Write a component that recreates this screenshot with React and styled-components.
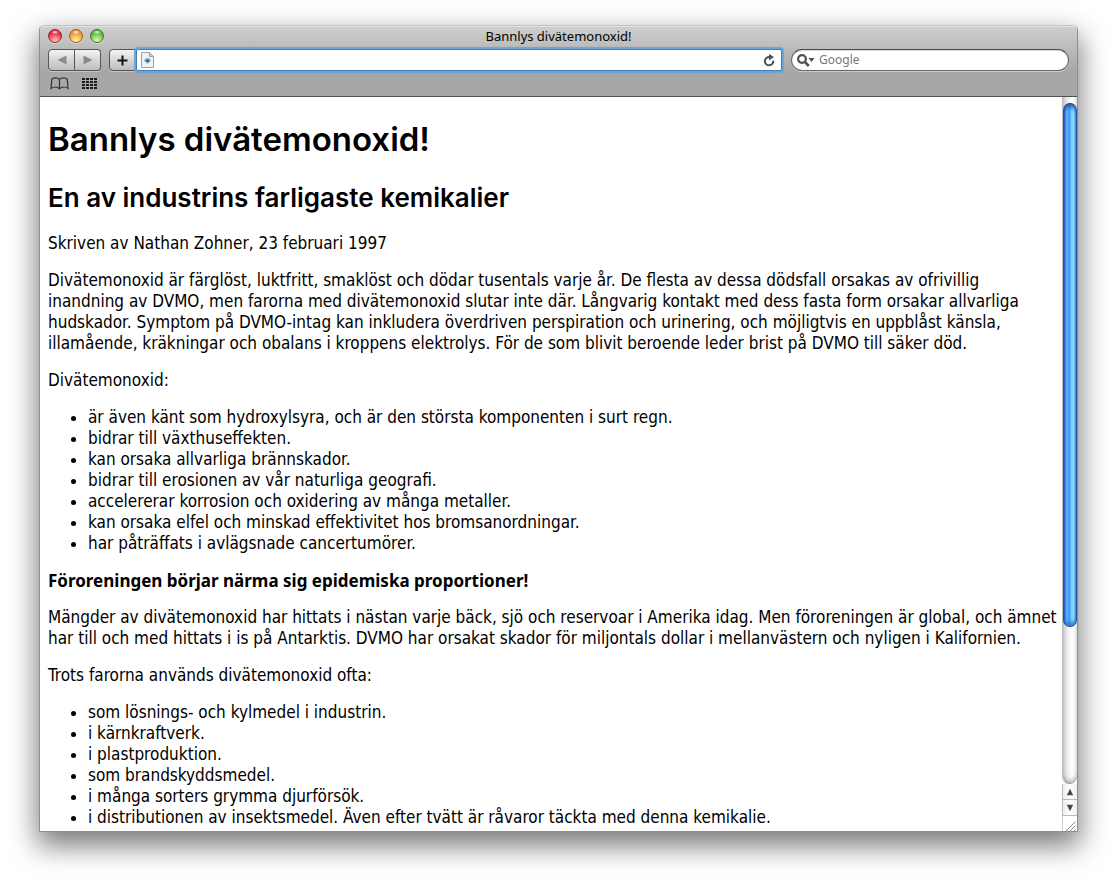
import React from "react";
import styled, { createGlobalStyle } from "styled-components";

const GlobalStyle = createGlobalStyle`
  *, *::before, *::after { box-sizing: border-box; }
  body {
    margin: 0;
    background: #fff;
    color: #000;
    font-family: "Noto Sans", "Open Sans", sans-serif;
  }
  button, input { font: inherit; }
`;

const Desktop = styled.div`
  display: flex;
  height: 100vh;
  padding: 25px 39px 54px;
`;

const Window = styled.main`
  flex: 1;
  min-width: 0;
  display: flex;
  flex-direction: column;
  overflow: hidden;
  border: 1px solid #8e8e8e;
  border-top-color: #c4c4c4;
  border-radius: 5px 5px 0 0;
  background: #fff;
  box-shadow: 0 12px 28px 2px rgba(0, 0, 0, 0.52);
`;

const Chrome = styled.header`
  height: 71px;
  flex: none;
  border-top: 1px solid #e2e2e2;
  border-bottom: 1px solid #515151;
  background: linear-gradient(#cecece, #a7a7a7 44px);
`;

const TitleBar = styled.div`
  display: grid;
  grid-template-columns: 1fr auto 1fr;
  align-items: center;
  height: 20px;
  padding: 0 8px 2px;
`;

const Lights = styled.div`
  display: flex;
  gap: 7px;
`;

const Light = styled.button`
  width: 14px;
  height: 14px;
  padding: 0;
  border: 1px solid ${(p) => p.$edge};
  border-radius: 50%;
  background:
    radial-gradient(ellipse 4px 2px at 50% 18%, rgba(255, 255, 255, 0.9), transparent),
    radial-gradient(circle at 50% 90%, ${(p) => p.$glow} 10%, ${(p) => p.$color} 75%);
  box-shadow: 0 1px 0 rgba(255, 255, 255, 0.4);
`;

const Title = styled.div`
  font-size: 13px;
  line-height: 18px;
`;

const ToolRow = styled.div`
  display: flex;
  align-items: center;
  height: 26px;
  padding: 0 8px;
`;

const ButtonGroup = styled.div`
  display: flex;
  margin-right: 8px;
`;

const ToolButton = styled.button`
  display: flex;
  align-items: center;
  justify-content: center;
  width: 27px;
  height: 22px;
  padding: 0;
  border: 1px solid #555;
  border-radius: ${(p) => p.$radius};
  background: linear-gradient(#f4f4f4, #d4d4d4 55%, #bebebe);
  box-shadow: 0 1px 0 rgba(255, 255, 255, 0.35);

  & + & { border-left: 0; width: 26px; }
`;

const AddressBar = styled.label`
  flex: 1;
  min-width: 0;
  display: flex;
  align-items: center;
  height: 22px;
  padding: 0 6px 0 4px;
  border: 1px solid #417fb6;
  border-radius: 2px;
  background: #fff;
  box-shadow: 0 0 1px 2px #69a5d7;
`;

const SearchBox = styled.label`
  flex: 0 1 278px;
  min-width: 0;
  display: flex;
  align-items: center;
  gap: 4px;
  height: 22px;
  margin-left: 9px;
  padding: 0 10px 0 5px;
  border: 1px solid #666;
  border-top-color: #4a4a4a;
  border-radius: 11px;
  background: #fff;
  box-shadow: inset 0 1px 1px rgba(0, 0, 0, 0.15), 0 1px 0 rgba(255, 255, 255, 0.4);
`;

const Field = styled.input`
  flex: 1;
  min-width: 0;
  height: 20px;
  padding: 0;
  border: 0;
  outline: 0;
  background: transparent;
  font-size: 12px;
  line-height: 20px;

  &::placeholder { color: #777; opacity: 1; }
`;

const IconButton = styled.button`
  display: flex;
  padding: 0;
  border: 0;
  background: none;
`;

const BookmarkBar = styled.nav`
  display: flex;
  align-items: center;
  gap: 13px;
  height: 20px;
  padding: 0 10px;
`;

const Viewport = styled.div`
  flex: 1;
  min-height: 0;
  display: flex;
`;

const Page = styled.article`
  flex: 1;
  min-width: 0;
  overflow: hidden;
  padding: 21px 4px 0 8px;
  font-family: "DejaVu Sans Condensed", "DejaVu Sans", sans-serif;
  font-size: 17px;
  line-height: 21px;

  p { margin: 0 0 16px; }
  ul { margin: 0 0 16px; padding-left: 40px; }
`;

const Heading = styled.h1`
  margin: 0 0 22px;
  font-family: Inter, "Noto Sans", sans-serif;
  font-size: 33px;
  font-weight: 600;
  line-height: 42px;
`;

const Subheading = styled.h2`
  margin: 0 0 19px;
  font-family: Inter, "Noto Sans", sans-serif;
  font-size: 26px;
  font-weight: 600;
  line-height: 32px;
`;

const Warning = styled.p`
  font-family: "Noto Sans", sans-serif;
  font-weight: 700;
`;

const Scrollbar = styled.aside`
  flex: none;
  display: flex;
  flex-direction: column;
  width: 15px;
`;

const Track = styled.div`
  flex: 1;
  min-height: 0;
  padding-top: 6px;
  border-left: 1px solid #bdbdbd;
  border-bottom: 1px solid #999;
  border-radius: 0 0 8px 8px;
  background: linear-gradient(90deg, #c9c9c9, #f0f0f0 35%, #fff 65%, #e4e4e4);
  box-shadow: inset 0 -5px 5px -3px rgba(0, 0, 0, 0.3);
`;

const Thumb = styled.div`
  height: 77%;
  border: 1px solid #2450a0;
  border-top-color: #333;
  border-bottom-color: #30496c;
  border-radius: 7px;
  background: linear-gradient(90deg, #1453c4, #69b1f5 22%, #4da4f4 38%, #3b9cf2 48%, #7ad0ff 62%, #8ae0ff 82%, #3d8edb);
  box-shadow: inset 0 5px 4px -2px #1a5ccb, inset 0 -5px 4px -2px #2b78d8;
`;

const ArrowButton = styled.button`
  display: flex;
  align-items: center;
  justify-content: center;
  height: 16px;
  padding: 0;
  border: solid #bbb;
  border-width: 0 0 1px 1px;
  background: linear-gradient(90deg, #ededed, #fff 50%, #eee);
`;

const ResizeCorner = styled.div`
  height: 15px;
  border-left: 1px solid #ccc;
`;

const Triangle = ({ d, color, size }) => (
  <svg width={size} height={size} viewBox="0 0 10 10" aria-hidden="true">
    <path d={d} fill={color} />
  </svg>
);

const PlusIcon = () => (
  <svg width="11" height="11" viewBox="0 0 11 11" aria-hidden="true">
    <path d="M4.5 0.5h2v4h4v2h-4v4h-2v-4h-4v-2h4z" fill="#111" />
  </svg>
);

const PageIcon = () => (
  <svg width="13" height="16" viewBox="0 0 13 16" aria-hidden="true">
    <path d="M0.5 0.5h8l4 4v11h-12z" fill="#f1f1f1" stroke="#a2a2a2" />
    <path d="M8.5 0.5v4h4z" fill="#d0d0d0" stroke="#a2a2a2" />
    <path d="M3 8.5q3.5-4.6 7 0q-3.5 4.6-7 0z" fill="#8a9aa6" />
    <circle cx="6.5" cy="8.2" r="2.2" fill="#54b5df" />
    <circle cx="6.5" cy="9" r="1.2" fill="#155983" />
    <path d="M6 10.5h1.5v1.3H6z" fill="#d39b8c" />
  </svg>
);

const ReloadIcon = () => (
  <svg width="12" height="13" viewBox="0 0 12 13" aria-hidden="true">
    <path d="M10.2 6.6A4.2 4.2 0 1 1 6.6 3" fill="none" stroke="#4f4f4f" strokeWidth="2" />
    <path d="M6 0l5 3-5 3.4z" fill="#4f4f4f" />
  </svg>
);

const SearchIcon = () => (
  <svg width="18" height="13" viewBox="0 0 18 13" aria-hidden="true">
    <circle cx="5" cy="5" r="3.9" fill="none" stroke="#505050" strokeWidth="2.2" />
    <path d="M7.8 7.8l4 4.2" stroke="#505050" strokeWidth="2.6" />
    <path d="M11.5 4h6l-3 4z" fill="#505050" />
  </svg>
);

const BookIcon = () => (
  <svg width="19" height="13" viewBox="0 0 19 13" aria-hidden="true">
    <path
      d="M9.5 2.4Q8 .8 5.5.8T1.8 2.2L1 11.4Q3 10 5.4 10t4.1 1.8Q11 10 13.6 10t4.4 1.4L17.2 2.2Q16 .8 13.5.8T9.5 2.4zM9.5 2.4v9.4"
      fill="none"
      stroke="#333"
      strokeWidth="1.2"
    />
  </svg>
);

const GridIcon = () => (
  <svg width="16" height="11" viewBox="0 0 16 11" aria-hidden="true">
    {[0, 3, 6, 9].map((y) =>
      [0, 4, 8, 12].map((x) => <rect key={`${x}-${y}`} x={x} y={y} width="3" height="2" fill="#1c1c1c" />)
    )}
  </svg>
);

const GripIcon = () => (
  <svg width="14" height="15" viewBox="0 0 14 15" aria-hidden="true">
    <path d="M2.5 13.5l10-10M6.5 13.5l6-6M10.5 13.5l2-2" stroke="#8a8a8a" fill="none" />
  </svg>
);

const lights = [
  { label: "Stäng", $color: "#e2152d", $glow: "#ffb0b4", $edge: "#8f2a33" },
  { label: "Minimera", $color: "#ee8a20", $glow: "#ffee90", $edge: "#98602c" },
  { label: "Zooma", $color: "#4eb235", $glow: "#ccf79a", $edge: "#3a7030" },
];

const properties = [
  "är även känt som hydroxylsyra, och är den största komponenten i surt regn.",
  "bidrar till växthuseffekten.",
  "kan orsaka allvarliga brännskador.",
  "bidrar till erosionen av vår naturliga geografi.",
  "accelererar korrosion och oxidering av många metaller.",
  "kan orsaka elfel och minskad effektivitet hos bromsanordningar.",
  "har påträffats i avlägsnade cancertumörer.",
];

const uses = [
  "som lösnings- och kylmedel i industrin.",
  "i kärnkraftverk.",
  "i plastproduktion.",
  "som brandskyddsmedel.",
  "i många sorters grymma djurförsök.",
  "i distributionen av insektsmedel. Även efter tvätt är råvaror täckta med denna kemikalie.",
];

const BulletList = ({ items }) => (
  <ul>
    {items.map((item) => (
      <li key={item}>{item}</li>
    ))}
  </ul>
);

export default function App() {
  return (
    <Desktop>
      <GlobalStyle />
      <Window>
        <Chrome>
          <TitleBar>
            <Lights>
              {lights.map(({ label, ...tone }) => (
                <Light key={label} aria-label={label} {...tone} />
              ))}
            </Lights>
            <Title>Bannlys divätemonoxid!</Title>
          </TitleBar>
          <ToolRow>
            <ButtonGroup>
              <ToolButton aria-label="Bakåt" $radius="4px 0 0 4px">
                <Triangle d="M0.5 5l9-4.5v9z" color="#8c8c8c" size={10} />
              </ToolButton>
              <ToolButton aria-label="Framåt" $radius="0 4px 4px 0">
                <Triangle d="M9.5 5l-9-4.5v9z" color="#8c8c8c" size={10} />
              </ToolButton>
            </ButtonGroup>
            <ToolButton aria-label="Lägg till bokmärke" $radius="4px 0 0 4px">
              <PlusIcon />
            </ToolButton>
            <AddressBar>
              <PageIcon />
              <Field type="text" aria-label="Adress" />
              <IconButton aria-label="Läs om">
                <ReloadIcon />
              </IconButton>
            </AddressBar>
            <SearchBox>
              <SearchIcon />
              <Field type="text" aria-label="Sök" placeholder="Google" />
            </SearchBox>
          </ToolRow>
          <BookmarkBar>
            <IconButton aria-label="Bokmärken">
              <BookIcon />
            </IconButton>
            <IconButton aria-label="Favoritsajter">
              <GridIcon />
            </IconButton>
          </BookmarkBar>
        </Chrome>
        <Viewport>
          <Page>
            <Heading>Bannlys divätemonoxid!</Heading>
            <Subheading>En av industrins farligaste kemikalier</Subheading>
            <p>Skriven av Nathan Zohner, 23 februari 1997</p>
            <p>
              Divätemonoxid är färglöst, luktfritt, smaklöst och dödar tusentals varje år. De flesta av dessa dödsfall
              orsakas av ofrivillig <br />
              inandning av DVMO, men farorna med divätemonoxid slutar inte där. Långvarig kontakt med dess fasta form
              orsakar allvarliga <br />
              hudskador. Symptom på DVMO-intag kan inkludera överdriven perspiration och urinering, och möjligtvis en
              uppblåst känsla, <br />
              illamående, kräkningar och obalans i kroppens elektrolys. För de som blivit beroende leder brist på DVMO
              till säker död.
            </p>
            <p>Divätemonoxid:</p>
            <BulletList items={properties} />
            <Warning>Föroreningen börjar närma sig epidemiska proportioner!</Warning>
            <p>
              Mängder av divätemonoxid har hittats i nästan varje bäck, sjö och reservoar i Amerika idag. Men
              föroreningen är global, och ämnet <br />
              har till och med hittats i is på Antarktis. DVMO har orsakat skador för miljontals dollar i mellanvästern
              och nyligen i Kalifornien.
            </p>
            <p>Trots farorna används divätemonoxid ofta:</p>
            <BulletList items={uses} />
          </Page>
          <Scrollbar aria-label="Rullningslist">
            <Track>
              <Thumb />
            </Track>
            <ArrowButton aria-label="Rulla upp">
              <Triangle d="M5 1l4 8H1z" color="#484848" size={8} />
            </ArrowButton>
            <ArrowButton aria-label="Rulla ned">
              <Triangle d="M5 9l4-8H1z" color="#484848" size={8} />
            </ArrowButton>
            <ResizeCorner>
              <GripIcon />
            </ResizeCorner>
          </Scrollbar>
        </Viewport>
      </Window>
    </Desktop>
  );
}
